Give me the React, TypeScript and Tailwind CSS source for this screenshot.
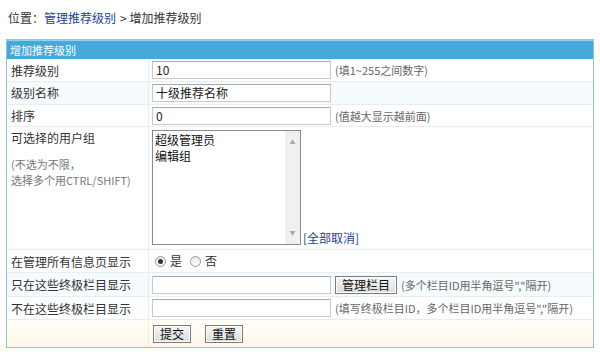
import type { FC, ReactNode } from 'react';

const font = { fontFamily: '"Noto Sans CJK SC", "Liberation Sans", sans-serif' };

type RowProps = { label: ReactNode; children?: ReactNode; className?: string; alt?: boolean };

const Row: FC<RowProps> = ({ label, children, className = 'h-[23px]', alt }) => (
  <div className={`flex border-b border-[#e6eef3] ${alt ? 'bg-[#f6fbfe]' : 'bg-white'} ${className}`}>
    <div className="w-[142px] shrink-0 border-r border-[#e6eef3] px-[4px] text-[#333]">{label}</div>
    <div className="flex flex-1 items-center gap-[4px] pl-[3px]">{children}</div>
  </div>
);

const Input: FC<{ value?: string }> = ({ value = '' }) => (
  <div className="flex h-[18px] w-[179px] items-center border border-[#c9c9c9] border-t-[#a8a8a8] bg-white px-[3px] text-[12px] text-[#222]">
    {value}
  </div>
);

const Hint: FC<{ children: ReactNode }> = ({ children }) => (
  <span className="text-[11px] text-[#666]">{children}</span>
);

const Btn: FC<{ children: ReactNode }> = ({ children }) => (
  <div className="flex h-[18px] items-center border border-[#7a7a7a] bg-gradient-to-b from-[#f6f6f6] to-[#dcdcdc] px-[6px] text-[12px] text-[#111] shadow-[inset_0_0_0_1px_#fff]">
    {children}
  </div>
);

const Radio: FC<{ checked?: boolean }> = ({ checked }) => (
  <span className="flex h-[11px] w-[11px] items-center justify-center rounded-full border border-[#9a9a9a] bg-gradient-to-b from-[#e8e8e8] to-white">
    {checked && <span className="h-[5px] w-[5px] rounded-full bg-[#333]" />}
  </span>
);

const App: FC = () => {
  return (
    <div className="h-[362px] w-[600px] bg-white text-[12px] leading-[16px] text-[#333]" style={font}>
      <div className="flex h-[34px] items-center pl-[8px] pt-[2px]">
        <span>位置：</span>
        <span className="text-[#1c3f95]">管理推荐级别</span>
        <span className="ml-[4px]">&gt; 增加推荐级别</span>
      </div>
      <div className="ml-[6px] mt-[5px] w-[588px] border border-[#8cc4d8]">
        <div className="flex h-[19px] items-center border-t border-[#8fd3ef] bg-[#45a9da] pl-[3px] text-[11px] text-white">
          增加推荐级别
        </div>
        <Row label={<div className="pt-[4px]">推荐级别</div>}>
          <Input value="10" />
          <Hint>(填1~255之间数字)</Hint>
        </Row>
        <Row alt className="h-[23px]" label={<div className="pt-[3px]">级别名称</div>}>
          <Input value="十级推荐名称" />
        </Row>
        <Row label={<div className="pt-[3px]">排序</div>} className="h-[22px]">
          <Input value="0" />
          <Hint>(值越大显示越前面)</Hint>
        </Row>
        <div className="flex h-[123px] border-b border-[#e6eef3] bg-white">
          <div className="w-[142px] shrink-0 border-r border-[#e6eef3] px-[4px] pt-[3px]">
            <div>可选择的用户组</div>
            <div className="mt-[10px] text-[11px] leading-[16px] text-[#777]">
              (不选为不限，
              <br />
              选择多个用CTRL/SHIFT)
            </div>
          </div>
          <div className="flex flex-1 items-end pb-[4px] pl-[3px] pt-[3px]">
            <div className="flex h-[115px] w-[149px] border border-[#8a8a8a] bg-white">
              <div className="flex-1 pl-[2px] pt-[1px] leading-[16px] text-[#111]">
                <div>超级管理员</div>
                <div>编辑组</div>
              </div>
              <div className="flex w-[15px] flex-col items-center justify-between bg-[#f0f0f0] py-[3px] text-[6px] text-[#aaa]">
                <span>▲</span>
                <span>▼</span>
              </div>
            </div>
            <span className="ml-[2px] leading-[14px] text-[#1c3f95]">[全部取消]</span>
          </div>
        </div>
        <Row label={<div className="pt-[4px]">在管理所有信息页显示</div>}>
          <div className="flex items-center pl-[3px]">
            <Radio checked />
            <span className="ml-[4px]">是</span>
            <span className="ml-[8px]">
              <Radio />
            </span>
            <span className="ml-[4px]">否</span>
          </div>
        </Row>
        <Row alt className="h-[24px]" label={<div className="pt-[4px]">只在这些终极栏目显示</div>}>
          <Input />
          <Btn>管理栏目</Btn>
          <Hint>(多个栏目ID用半角逗号","隔开)</Hint>
        </Row>
        <Row label={<div className="pt-[4px]">不在这些终极栏目显示</div>}>
          <Input />
          <Hint>(填写终极栏目ID，多个栏目ID用半角逗号","隔开)</Hint>
        </Row>
        <div className="flex h-[27px] bg-gradient-to-b from-[#fffef8] to-[#fff8e8]">
          <div className="w-[142px] shrink-0 border-r border-[#f0ece0]" />
          <div className="flex items-center gap-[14px] pl-[4px]">
            <Btn>提交</Btn>
            <Btn>重置</Btn>
          </div>
        </div>
      </div>
    </div>
  );
};

export default App;
